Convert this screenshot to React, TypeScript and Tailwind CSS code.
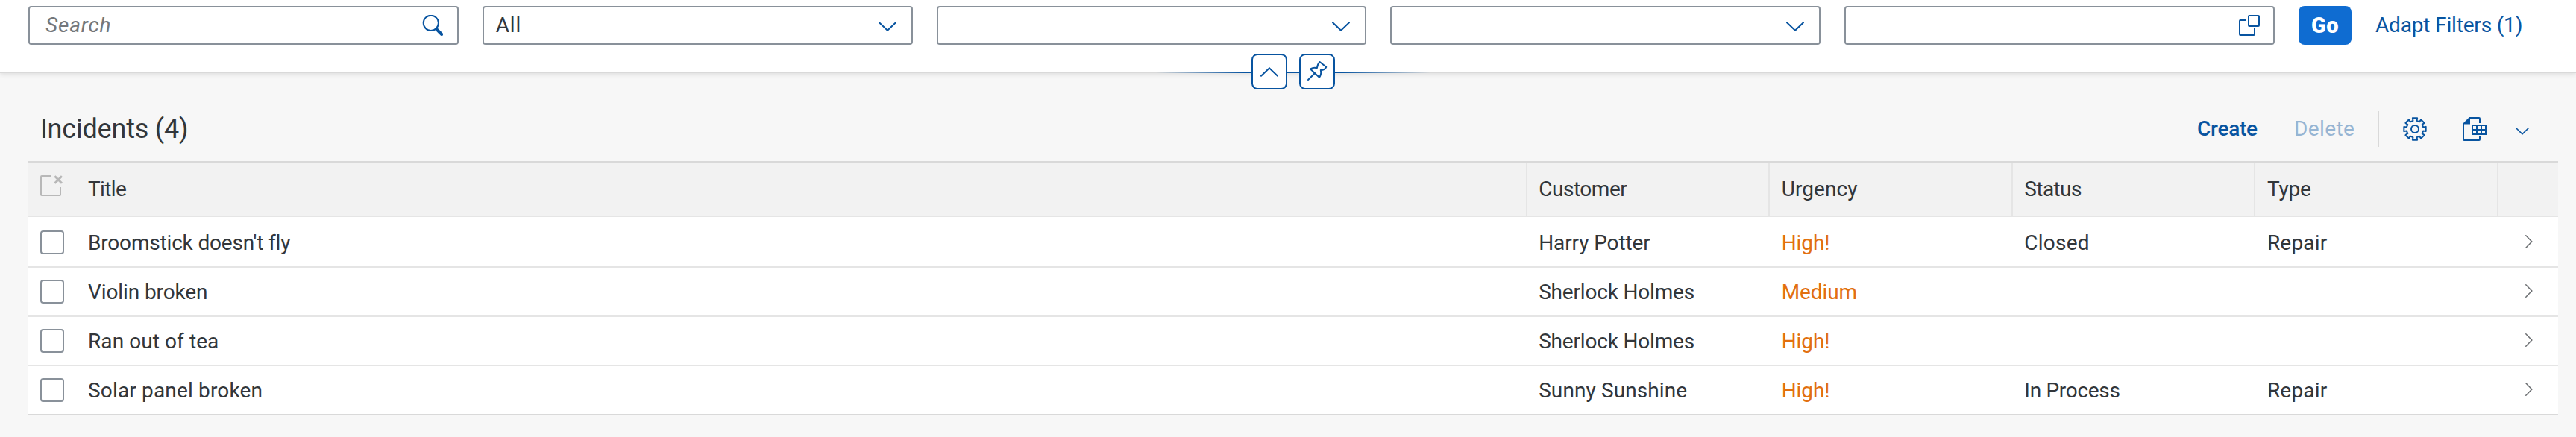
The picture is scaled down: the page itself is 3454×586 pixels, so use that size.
import type { ReactNode } from "react";

type Incident = {
  title: [string, string];
  customer: [string, string];
  urgency: string;
  status?: [string, string];
  type?: string;
};

const incidents: Incident[] = [
  {
    title: ["Broomstick doesn't fly", "tracking-[-0.18px]"],
    customer: ["Harry Potter", "tracking-[-0.1px]"],
    urgency: "High!",
    status: ["Closed", "tracking-[0.25px]"],
    type: "Repair",
  },
  {
    title: ["Violin broken", "tracking-[-0.1px]"],
    customer: ["Sherlock Holmes", "tracking-[-0.18px]"],
    urgency: "Medium",
  },
  {
    title: ["Ran out of tea", "tracking-[0.08px]"],
    customer: ["Sherlock Holmes", "tracking-[-0.18px]"],
    urgency: "High!",
  },
  {
    title: ["Solar panel broken", "tracking-[0.16px]"],
    customer: ["Sunny Sunshine", "tracking-[0.1px]"],
    urgency: "High!",
    status: ["In Process", "tracking-[-0.3px]"],
    type: "Repair",
  },
];

const columns: [string, string][] = [
  ["Customer", "tracking-[-0.45px]"],
  ["Urgency", "tracking-[0.06px]"],
  ["Status", "tracking-[-0.6px]"],
  ["Type", "tracking-[-0.2px]"],
];

const gridColumns = "grid grid-cols-[80px_1fr_325.6px_325.6px_325.6px_325.6px_82px]";

function gearPath() {
  const points: string[] = [];
  for (let i = 0; i < 8; i++) {
    const corners: [number, number][] = [
      [-13, 11.4],
      [-12, 15],
      [12, 15],
      [13, 11.4],
    ];
    for (const [offset, radius] of corners) {
      const angle = ((i * 45 + offset) * Math.PI) / 180;
      points.push(`${(16 + radius * Math.sin(angle)).toFixed(2)} ${(16 - radius * Math.cos(angle)).toFixed(2)}`);
    }
  }
  return `M${points.join("L")}Z`;
}

function SearchIcon() {
  return (
    <svg width="28" height="28" viewBox="0 0 28 28" fill="none" stroke="#0854a0">
      <circle cx="11.8" cy="10.8" r="10.1" strokeWidth="2" />
      <path d="M19.2 19L26.2 26" strokeWidth="4" strokeLinecap="round" />
    </svg>
  );
}

function ChevronDown() {
  return (
    <svg width="24" height="13" viewBox="0 0 24 13" fill="none" stroke="#0854a0" strokeWidth="2" strokeLinecap="round">
      <path d="M1 1.3L12 11.8L23 1.3" />
    </svg>
  );
}

function ValueHelpIcon() {
  return (
    <svg width="28" height="28" viewBox="0 0 28 28" fill="none" stroke="#0854a0" strokeWidth="2">
      <rect x="13" y="1" width="14" height="14" rx="1" />
      <path d="M10 7H2Q1 7 1 8V26Q1 27 2 27H20Q21 27 21 26V18" />
    </svg>
  );
}

function PinIcon() {
  return (
    <svg width="44" height="44" viewBox="2 2 44 44" fill="none" stroke="#0854a0" strokeWidth="2" strokeLinejoin="round" strokeLinecap="round">
      <path d="M15 20.4Q19.5 18 23.8 19.3Q24.5 14 27.6 11L36.2 17.8Q34.8 21.6 28.8 22Q30.2 27.5 27 31.8Z" />
      <path d="M20.8 26.2L12 35" />
    </svg>
  );
}

function GearIcon() {
  return (
    <svg width="32" height="32" viewBox="0 0 32 32" fill="none" stroke="#0854a0" strokeWidth="2" strokeLinejoin="round">
      <path d={gearPath()} />
      <circle cx="16" cy="16" r="5" />
    </svg>
  );
}

function ExportIcon() {
  return (
    <svg width="32" height="32" viewBox="0 0 32 32" fill="none" stroke="#0854a0" strokeWidth="2">
      <path d="M0 9L9 0H10V9.5H0Z" fill="#0854a0" stroke="none" />
      <path d="M9 1H22Q23 1 23 2V8M23 26V30Q23 31 22 31H2Q1 31 1 30V8.5" />
      <path d="M13 11H31V23H13ZM19 11V23M25 11V23M13 17H31" />
    </svg>
  );
}

function DeselectIcon() {
  return (
    <svg width="30" height="28" viewBox="0 0 30 28" fill="none" stroke="#b8b8b8" strokeWidth="2">
      <path d="M14 1H2Q1 1 1 2V26Q1 27 2 27H26Q27 27 27 26V16" />
      <path d="M19.4 1.2L29 10.8M29 1.2L19.4 10.8" strokeWidth="3" />
    </svg>
  );
}

function Field({ children }: { children?: ReactNode }) {
  return (
    <div className="flex h-[52px] w-[576.8px] shrink-0 items-center rounded-[4px] border-2 border-[#89919a] bg-white">
      {children}
    </div>
  );
}

export default function App() {
  return (
    <div className="h-[586px] w-full overflow-hidden bg-[#f7f7f7] font-['Roboto','Liberation_Sans',sans-serif] text-[28px] leading-8 text-[#32363a]">
      <header className="relative flex h-[98px] items-start gap-8 border-b-2 border-[#d9d9d9] bg-white pl-[38px] pt-2 shadow-[0_2px_6px_rgba(0,0,0,0.1)]">
        <Field>
          <span className="grow pl-[21px] italic tracking-[0.8px] text-[#74777a]">Search</span>
          <span className="mr-[19px]"><SearchIcon /></span>
        </Field>
        <Field>
          <span className="grow pl-4 tracking-[0.8px]">All</span>
          <span className="mr-5 mt-[3px]"><ChevronDown /></span>
        </Field>
        <Field>
          <span className="ml-auto mr-5 mt-[3px]"><ChevronDown /></span>
        </Field>
        <Field>
          <span className="ml-auto mr-5 mt-[3px]"><ChevronDown /></span>
        </Field>
        <Field>
          <span className="ml-auto mr-[18px]"><ValueHelpIcon /></span>
        </Field>
        <button className="flex h-[52px] w-[71px] shrink-0 items-center justify-center rounded-[8px] bg-[#0f6cd1] text-[29px] font-black tracking-[0.5px] text-white">
          Go
        </button>
        <button className="flex h-[52px] items-center whitespace-nowrap tracking-[-0.17px] text-[#0854a0]">
          Adapt Filters (1)
        </button>

        <div className="absolute left-[1550px] top-[72px] flex h-12 w-[368px] items-center justify-center gap-4">
          <div className="absolute inset-x-0 top-6 h-0.5 bg-[linear-gradient(to_right,transparent,#0854a0_32%,#0854a0_68%,transparent)]" />
          <button className="relative flex size-12 items-center justify-center rounded-[8px] border-2 border-[#0854a0] bg-white">
            <svg width="24" height="13" viewBox="0 0 24 13" fill="none" stroke="#0854a0" strokeWidth="2" strokeLinecap="round">
              <path d="M1 11.8L12 1.3L23 11.8" />
            </svg>
          </button>
          <button className="relative flex size-12 items-center justify-center rounded-[8px] border-2 border-[#0854a0] bg-white">
            <PinIcon />
          </button>
        </div>
      </header>

      <main className="pl-[38px] pr-6">
        <div className="flex h-[118px] items-center pt-8">
          <h2 className="grow pl-4 text-[36px] leading-10 tracking-[-0.2px]">Incidents (4)</h2>
          <button className="w-[130px] text-left font-medium tracking-[-0.26px] text-[#0854a0]">Create</button>
          <button className="w-[112px] text-left tracking-[0.4px] text-[#0854a0] opacity-40">Delete</button>
          <span className="h-12 w-0.5 bg-[#d9d9d9]" />
          <span className="ml-8"><GearIcon /></span>
          <span className="ml-12"><ExportIcon /></span>
          <span className="mx-[39px] mt-1.5">
            <svg width="18" height="10" viewBox="0 0 18 10" fill="none" stroke="#0854a0" strokeWidth="1.6" strokeLinecap="round">
              <path d="M0.8 0.8L9 8.8L17.2 0.8" />
            </svg>
          </span>
        </div>

        <section className="border-y-2 border-[#d9d9d9] bg-white">
          <div className={`${gridColumns} h-[73px] border-b-2 border-[#e5e5e5] bg-[#f2f2f2]`}>
            <div className="pl-4 pt-[17px]"><DeselectIcon /></div>
            <div className="flex items-center tracking-[-0.65px]">Title</div>
            {columns.map(([label, tracking]) => (
              <div key={label} className={`flex items-center border-l-2 border-[#e5e5e5] pl-[15.5px] ${tracking}`}>
                {label}
              </div>
            ))}
            <div className="border-l-2 border-[#e5e5e5]" />
          </div>

          <div className="pt-0.5">
            {incidents.map((row) => (
              <div key={row.title[0]} className={`${gridColumns} h-[66px] items-center border-b-2 border-[#e5e5e5] last:h-16 last:border-b-0`}>
                <div className="pl-4">
                  <div className="size-8 rounded-[4px] border-2 border-[#89919a] bg-white" />
                </div>
                <div className={`pt-px ${row.title[1]}`}>{row.title[0]}</div>
                <div className={`pl-[17.5px] pt-px ${row.customer[1]}`}>{row.customer[0]}</div>
                <div className="pl-[17.5px] pt-px tracking-[-0.1px] text-[#e2700e]">{row.urgency}</div>
                <div className={`pl-[17.5px] pt-px ${row.status ? row.status[1] : ""}`}>{row.status?.[0]}</div>
                <div className="pl-[17.5px] pt-px tracking-[0.2px]">{row.type}</div>
                <div className="flex pb-[3px] pl-[38px]">
                  <svg width="10" height="18" viewBox="0 0 10 18" fill="none" stroke="#6a6d70" strokeWidth="1.5" strokeLinecap="round">
                    <path d="M0.8 0.8L8.8 9L0.8 17.2" />
                  </svg>
                </div>
              </div>
            ))}
          </div>
        </section>
      </main>
    </div>
  );
}
